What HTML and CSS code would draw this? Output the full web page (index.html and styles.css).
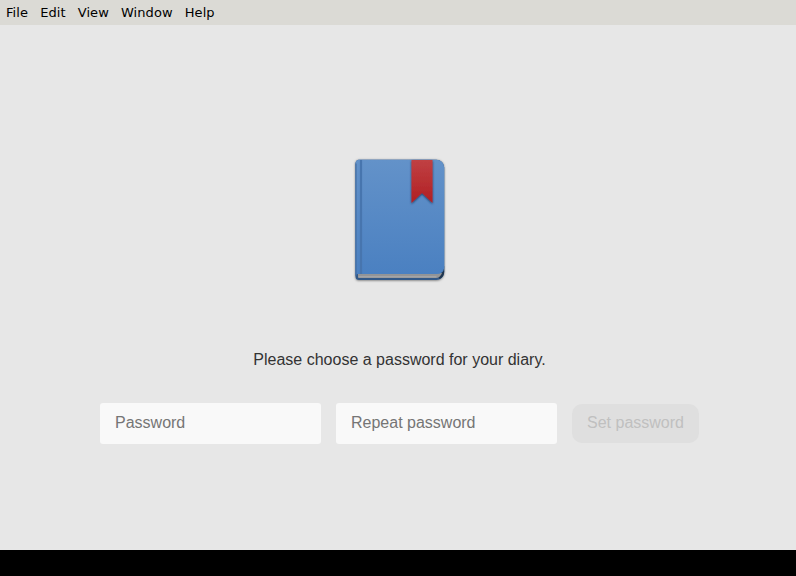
FILE: index.html
```html
<!DOCTYPE html>
<html lang="en">
<head>
<meta charset="utf-8">
<title>Diary</title>
<link rel="stylesheet" href="styles.css">
</head>
<body>
<nav class="menubar"><span>File</span><span>Edit</span><span>View</span><span>Window</span><span>Help</span></nav>
<main class="content">
<svg class="logo" width="128" height="128" viewBox="336 156 128 128" aria-hidden="true">
<defs>
<linearGradient id="cover" x1="0" y1="0" x2="0" y2="1"><stop offset="0" stop-color="#6392c9"/><stop offset="1" stop-color="#4a80c1"/></linearGradient>
<linearGradient id="ribbon" x1="0" y1="0" x2="0" y2="1"><stop offset="0" stop-color="#c04043"/><stop offset="1" stop-color="#b12023"/></linearGradient>
<filter id="shadow" x="-20%" y="-20%" width="140%" height="140%"><feDropShadow dx="0" dy="0.5" stdDeviation="0.9" flood-color="#000" flood-opacity=".55"/></filter>
<filter id="soft" x="-20%" y="-20%" width="140%" height="150%"><feDropShadow dx="0" dy="1" stdDeviation="1.1" flood-color="#102a4c" flood-opacity=".85"/></filter>
</defs>
<path d="M358.500 159.700h78a7.700 7.700 0 0 1 7.700 7.700V272a8 8 0 0 1-8 8H359a3.500 3.500 0 0 1-3.500-3.500V163.500a4 4 0 0 1 3-3.800z" fill="#315887" filter="url(#shadow)"/>
<path d="M444.200 266v6a8 8 0 0 1-4.500 7l-2-3z" fill="#20364f"/>
<path d="M358 273h84q-2 5-6 5h-77q-1 0-1-1z" fill="#929497"/>
<path d="M358.500 276.800h78" stroke="#aaacaf"/>
<path d="M358.500 159.700h78a7.700 7.700 0 0 1 7.700 7.700V268q-1 6-7.500 6h-79q-1.700 0-2.200 2V163.500a4 4 0 0 1 3-3.800z" fill="url(#cover)"/>
<path d="M356 163.500V276" stroke="#416b9e"/>
<path d="M361 160v114" stroke="#4775ae" stroke-width="2.200"/>
<path d="M411.500 160h21v43l-10.500-10-10.500 10z" fill="url(#ribbon)" filter="url(#soft)"/>
</svg>
<p class="intro">Please choose a password for your diary.</p>
<form class="form">
<input class="field" type="password" placeholder="Password">
<input class="field" type="password" placeholder="Repeat password">
<button class="submit" type="submit" disabled>Set password</button>
</form>
</main>
</body>
</html>
```
FILE: styles.css
```css
* {
  box-sizing: border-box;
}

body {
  margin: 0;
  height: 576px;
  overflow: hidden;
  background: #000;
  font: 16px/18px "Liberation Sans", Arial, sans-serif;
  color: #333;
}

.menubar {
  display: flex;
  gap: 12.1px;
  height: 25px;
  padding-left: 6px;
  background: #dbdad5;
  color: #000;
  font: 13px/25px "DejaVu Sans", sans-serif;
  letter-spacing: 0.07px;
}

.content {
  display: flex;
  flex-direction: column;
  align-items: center;
  height: 525px;
  padding: 131px 0 0 3px;
  background: #e7e7e7;
}

.logo {
  display: block;
}

.intro {
  margin: 67px 0 34px;
}

.form {
  display: flex;
  align-items: center;
  gap: 15px;
}

.field {
  width: 221px;
  height: 41px;
  padding: 0 15px 2px;
  border: 0;
  border-radius: 3px;
  background: #f9f9f9;
  font: inherit;
}

.field::placeholder {
  color: #757575;
}

.submit {
  width: 127px;
  height: 39px;
  padding: 0 0 2px;
  border: 0;
  border-radius: 10px;
  background: #dfdfdf;
  color: #c0c0c0;
  font: inherit;
}
```
